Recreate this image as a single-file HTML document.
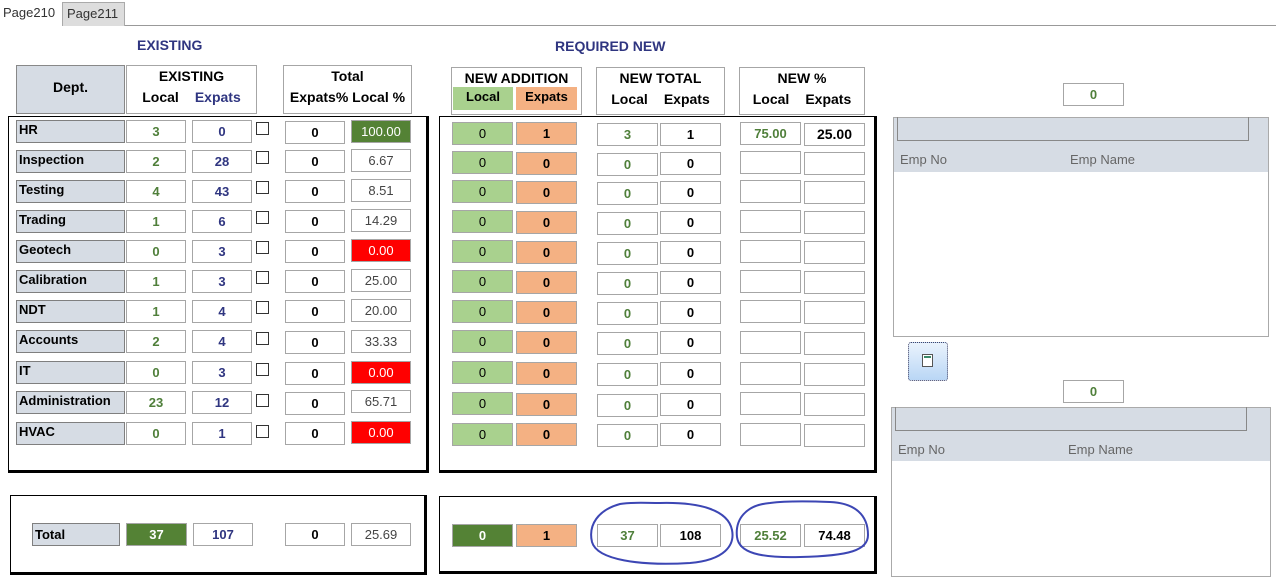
<!DOCTYPE html>
<html><head><meta charset="utf-8"><style>
*{box-sizing:border-box;margin:0;padding:0}
body{width:1276px;height:583px;background:#fff;position:relative;overflow:hidden;font-family:"Liberation Sans",sans-serif;font-size:13px;font-weight:bold}
div{position:absolute}
.c{border:1px solid #a6a6a6;background:#fff;height:23px;text-align:center;line-height:21px}
.l{border:1px solid #7f7f7f;background:#d6dce4;height:23px;padding-left:2px;line-height:17px;width:109px;left:16px}
.g{color:#4f7f3a}.b{color:#2f3580}.n{font-weight:normal;color:#444}
.red{background:#f00;color:#fff;font-weight:normal}
.dg{background:#548235;color:#fff}
.lg{background:#a9d18e;font-weight:normal}
.or{background:#f4b183}
.cb{width:13px;height:13px;border:1px solid #333;left:256px;background:#fff}
.pan{border-left:1px solid #000;border-top:1px solid #000;border-right:3px solid #000;border-bottom:3px solid #000}
.h{border:1px solid #a6a6a6;text-align:center;font-size:14px}
</style></head><body>
<div style="left:0;top:0;width:62px;height:26px;font-weight:normal;color:#333;padding:5px 0 0 3px;font-size:13px">Page210</div>
<div style="left:62px;top:2px;width:63px;height:24px;background:#ddd;border:1px solid #aaa;border-bottom:none;font-weight:normal;color:#333;padding:3px 0 0 4px">Page211</div>
<div style="left:125px;top:25px;width:1151px;height:1px;background:#999"></div>
<div style="left:137px;top:37px;color:#2f3580;font-size:14px">EXISTING</div>
<div style="left:555px;top:38px;color:#2f3580;font-size:14px">REQUIRED NEW</div>

<div class="h" style="left:16px;top:65px;width:109px;height:49px;background:#d6dce4;border-color:#888;line-height:43px">Dept.</div>
<div class="h" style="left:126px;top:65px;width:131px;height:49px;line-height:21px">EXISTING<br><span style="margin-right:16px">Local</span><span class="b">Expats</span></div>
<div class="h" style="left:283px;top:65px;width:129px;height:49px;line-height:21px">Total<br>Expats% Local %</div>
<div class="h" style="left:451px;top:67px;width:131px;height:48px;line-height:20px">NEW ADDITION</div>
<div style="left:453px;top:87px;width:60px;height:23px;background:#a9d18e;text-align:center;line-height:20px">Local</div>
<div style="left:516px;top:87px;width:61px;height:23px;background:#f4b183;text-align:center;line-height:20px">Expats</div>
<div class="h" style="left:596px;top:67px;width:129px;height:48px;line-height:21px">NEW TOTAL<br><span style="margin-right:16px">Local</span>Expats</div>
<div class="h" style="left:739px;top:67px;width:126px;height:48px;line-height:21px">NEW %<br><span style="margin-right:16px">Local</span>Expats</div>

<div class="pan" style="left:8px;top:116px;width:421px;height:357px"></div>
<div class="pan" style="left:439px;top:116px;width:438px;height:357px"></div>

<div class="l" style="top:120px">HR</div><div class="c g" style="left:126px;top:120px;width:60px">3</div><div class="c b" style="left:192px;top:120px;width:60px">0</div><div class="cb" style="top:122px"></div><div class="c" style="left:285px;top:121px;width:60px">0</div><div class="c dg" style="left:351px;top:120px;width:60px;font-weight:normal">100.00</div>
<div class="l" style="top:150px">Inspection</div><div class="c g" style="left:126px;top:150px;width:60px">2</div><div class="c b" style="left:192px;top:150px;width:60px">28</div><div class="cb" style="top:151px"></div><div class="c" style="left:285px;top:150px;width:60px">0</div><div class="c n" style="left:351px;top:149px;width:60px">6.67</div>
<div class="l" style="top:180px">Testing</div><div class="c g" style="left:126px;top:180px;width:60px">4</div><div class="c b" style="left:192px;top:180px;width:60px">43</div><div class="cb" style="top:181px"></div><div class="c" style="left:285px;top:180px;width:60px">0</div><div class="c n" style="left:351px;top:179px;width:60px">8.51</div>
<div class="l" style="top:210px">Trading</div><div class="c g" style="left:126px;top:210px;width:60px">1</div><div class="c b" style="left:192px;top:210px;width:60px">6</div><div class="cb" style="top:211px"></div><div class="c" style="left:285px;top:210px;width:60px">0</div><div class="c n" style="left:351px;top:209px;width:60px">14.29</div>
<div class="l" style="top:240px">Geotech</div><div class="c g" style="left:126px;top:240px;width:60px">0</div><div class="c b" style="left:192px;top:240px;width:60px">3</div><div class="cb" style="top:241px"></div><div class="c" style="left:285px;top:240px;width:60px">0</div><div class="c red" style="left:351px;top:239px;width:60px">0.00</div>
<div class="l" style="top:270px">Calibration</div><div class="c g" style="left:126px;top:270px;width:60px">1</div><div class="c b" style="left:192px;top:270px;width:60px">3</div><div class="cb" style="top:271px"></div><div class="c" style="left:285px;top:270px;width:60px">0</div><div class="c n" style="left:351px;top:269px;width:60px">25.00</div>
<div class="l" style="top:300px">NDT</div><div class="c g" style="left:126px;top:300px;width:60px">1</div><div class="c b" style="left:192px;top:300px;width:60px">4</div><div class="cb" style="top:301px"></div><div class="c" style="left:285px;top:300px;width:60px">0</div><div class="c n" style="left:351px;top:299px;width:60px">20.00</div>
<div class="l" style="top:330px">Accounts</div><div class="c g" style="left:126px;top:330px;width:60px">2</div><div class="c b" style="left:192px;top:330px;width:60px">4</div><div class="cb" style="top:332px"></div><div class="c" style="left:285px;top:331px;width:60px">0</div><div class="c n" style="left:351px;top:330px;width:60px">33.33</div>
<div class="l" style="top:361px">IT</div><div class="c g" style="left:126px;top:361px;width:60px">0</div><div class="c b" style="left:192px;top:361px;width:60px">3</div><div class="cb" style="top:363px"></div><div class="c" style="left:285px;top:362px;width:60px">0</div><div class="c red" style="left:351px;top:361px;width:60px">0.00</div>
<div class="l" style="top:391px">Administration</div><div class="c g" style="left:126px;top:391px;width:60px">23</div><div class="c b" style="left:192px;top:391px;width:60px">12</div><div class="cb" style="top:394px"></div><div class="c" style="left:285px;top:392px;width:60px">0</div><div class="c n" style="left:351px;top:390px;width:60px">65.71</div>
<div class="l" style="top:422px">HVAC</div><div class="c g" style="left:126px;top:422px;width:60px">0</div><div class="c b" style="left:192px;top:422px;width:60px">1</div><div class="cb" style="top:425px"></div><div class="c" style="left:285px;top:422px;width:60px">0</div><div class="c red" style="left:351px;top:421px;width:60px">0.00</div>

<div class="c lg" style="left:452px;top:122px;width:61px">0</div><div class="c or" style="left:516px;top:122px;width:61px">1</div><div class="c g" style="left:597px;top:123px;width:61px">3</div><div class="c" style="left:660px;top:123px;width:61px">1</div><div class="c g" style="left:740px;top:122px;width:61px">75.00</div><div class="c" style="left:804px;top:123px;width:61px;font-size:14px">25.00</div>
<div class="c lg" style="left:452px;top:151px;width:61px">0</div><div class="c or" style="left:516px;top:152px;width:61px">0</div><div class="c g" style="left:597px;top:153px;width:61px">0</div><div class="c" style="left:660px;top:152px;width:61px">0</div><div class="c" style="left:740px;top:151px;width:61px"></div><div class="c" style="left:804px;top:152px;width:61px"></div>
<div class="c lg" style="left:452px;top:180px;width:61px">0</div><div class="c or" style="left:516px;top:181px;width:61px">0</div><div class="c g" style="left:597px;top:182px;width:61px">0</div><div class="c" style="left:660px;top:181px;width:61px">0</div><div class="c" style="left:740px;top:180px;width:61px"></div><div class="c" style="left:804px;top:181px;width:61px"></div>
<div class="c lg" style="left:452px;top:210px;width:61px">0</div><div class="c or" style="left:516px;top:211px;width:61px">0</div><div class="c g" style="left:597px;top:212px;width:61px">0</div><div class="c" style="left:660px;top:211px;width:61px">0</div><div class="c" style="left:740px;top:210px;width:61px"></div><div class="c" style="left:804px;top:211px;width:61px"></div>
<div class="c lg" style="left:452px;top:240px;width:61px">0</div><div class="c or" style="left:516px;top:241px;width:61px">0</div><div class="c g" style="left:597px;top:242px;width:61px">0</div><div class="c" style="left:660px;top:241px;width:61px">0</div><div class="c" style="left:740px;top:240px;width:61px"></div><div class="c" style="left:804px;top:241px;width:61px"></div>
<div class="c lg" style="left:452px;top:270px;width:61px">0</div><div class="c or" style="left:516px;top:271px;width:61px">0</div><div class="c g" style="left:597px;top:272px;width:61px">0</div><div class="c" style="left:660px;top:271px;width:61px">0</div><div class="c" style="left:740px;top:270px;width:61px"></div><div class="c" style="left:804px;top:271px;width:61px"></div>
<div class="c lg" style="left:452px;top:300px;width:61px">0</div><div class="c or" style="left:516px;top:301px;width:61px">0</div><div class="c g" style="left:597px;top:302px;width:61px">0</div><div class="c" style="left:660px;top:301px;width:61px">0</div><div class="c" style="left:740px;top:300px;width:61px"></div><div class="c" style="left:804px;top:301px;width:61px"></div>
<div class="c lg" style="left:452px;top:330px;width:61px">0</div><div class="c or" style="left:516px;top:331px;width:61px">0</div><div class="c g" style="left:597px;top:332px;width:61px">0</div><div class="c" style="left:660px;top:331px;width:61px">0</div><div class="c" style="left:740px;top:331px;width:61px"></div><div class="c" style="left:804px;top:332px;width:61px"></div>
<div class="c lg" style="left:452px;top:361px;width:61px">0</div><div class="c or" style="left:516px;top:362px;width:61px">0</div><div class="c g" style="left:597px;top:363px;width:61px">0</div><div class="c" style="left:660px;top:362px;width:61px">0</div><div class="c" style="left:740px;top:362px;width:61px"></div><div class="c" style="left:804px;top:363px;width:61px"></div>
<div class="c lg" style="left:452px;top:392px;width:61px">0</div><div class="c or" style="left:516px;top:393px;width:61px">0</div><div class="c g" style="left:597px;top:394px;width:61px">0</div><div class="c" style="left:660px;top:393px;width:61px">0</div><div class="c" style="left:740px;top:392px;width:61px"></div><div class="c" style="left:804px;top:393px;width:61px"></div>
<div class="c lg" style="left:452px;top:423px;width:61px">0</div><div class="c or" style="left:516px;top:423px;width:61px">0</div><div class="c g" style="left:597px;top:424px;width:61px">0</div><div class="c" style="left:660px;top:423px;width:61px">0</div><div class="c" style="left:740px;top:423px;width:61px"></div><div class="c" style="left:804px;top:424px;width:61px"></div>

<div class="pan" style="left:10px;top:495px;width:417px;height:80px"></div>
<div class="pan" style="left:439px;top:496px;width:438px;height:78px"></div>
<div class="l" style="left:32px;top:523px;width:88px;line-height:21px">Total</div>
<div class="c dg" style="left:126px;top:523px;width:61px">37</div>
<div class="c b" style="left:193px;top:523px;width:60px">107</div>
<div class="c" style="left:285px;top:523px;width:60px">0</div>
<div class="c n" style="left:351px;top:523px;width:60px">25.69</div>
<div class="c dg" style="left:452px;top:524px;width:61px">0</div>
<div class="c or" style="left:516px;top:524px;width:61px">1</div>
<div class="c g" style="left:597px;top:524px;width:61px">37</div>
<div class="c" style="left:660px;top:524px;width:61px">108</div>
<div class="c g" style="left:740px;top:524px;width:61px">25.52</div>
<div class="c" style="left:804px;top:524px;width:61px">74.48</div>
<svg style="position:absolute;left:0;top:0" width="1276" height="583"><g fill="none" stroke="#3c46b4" stroke-width="2">
<path d="M620 504 C598 510 588 525 592 542 C597 560 640 566 690 563 C725 560 735 545 732 530 C728 510 700 502 660 503 C645 503 630 502 620 504Z"/>
<path d="M770 503 C745 505 735 520 737 537 C739 553 760 558 800 557 C850 556 868 550 868 535 C868 515 855 503 830 502 C805 501 785 501 770 503Z"/>
</g></svg>

<div class="c g" style="left:1063px;top:83px;width:61px">0</div>
<div style="left:893px;top:117px;width:376px;height:220px;border:1px solid #aaa;background:#fff"></div>
<div style="left:894px;top:118px;width:374px;height:54px;background:#d6dce4"></div>
<div style="left:897px;top:117px;width:352px;height:24px;border:1px solid #888;border-top:none"></div>
<div style="left:900px;top:152px;font-weight:normal;color:#666;font-size:13px">Emp No</div>
<div style="left:1070px;top:152px;font-weight:normal;color:#666;font-size:13px">Emp Name</div>
<div style="left:908px;top:342px;width:40px;height:39px;border:1px dotted #446;border-radius:3px;background:linear-gradient(#eaf3fd,#b9d6f5)"></div>
<div style="left:922px;top:354px;width:11px;height:13px;border:1px solid #555;background:#fff"></div>
<div style="left:924px;top:356px;width:7px;height:2px;background:#3a8a6a"></div>
<div class="c g" style="left:1063px;top:380px;width:61px">0</div>
<div style="left:891px;top:407px;width:380px;height:170px;border:1px solid #aaa;background:#fff"></div>
<div style="left:892px;top:408px;width:378px;height:53px;background:#d6dce4"></div>
<div style="left:895px;top:407px;width:352px;height:24px;border:1px solid #888;border-top:none"></div>
<div style="left:898px;top:442px;font-weight:normal;color:#666;font-size:13px">Emp No</div>
<div style="left:1068px;top:442px;font-weight:normal;color:#666;font-size:13px">Emp Name</div>
</body></html>
